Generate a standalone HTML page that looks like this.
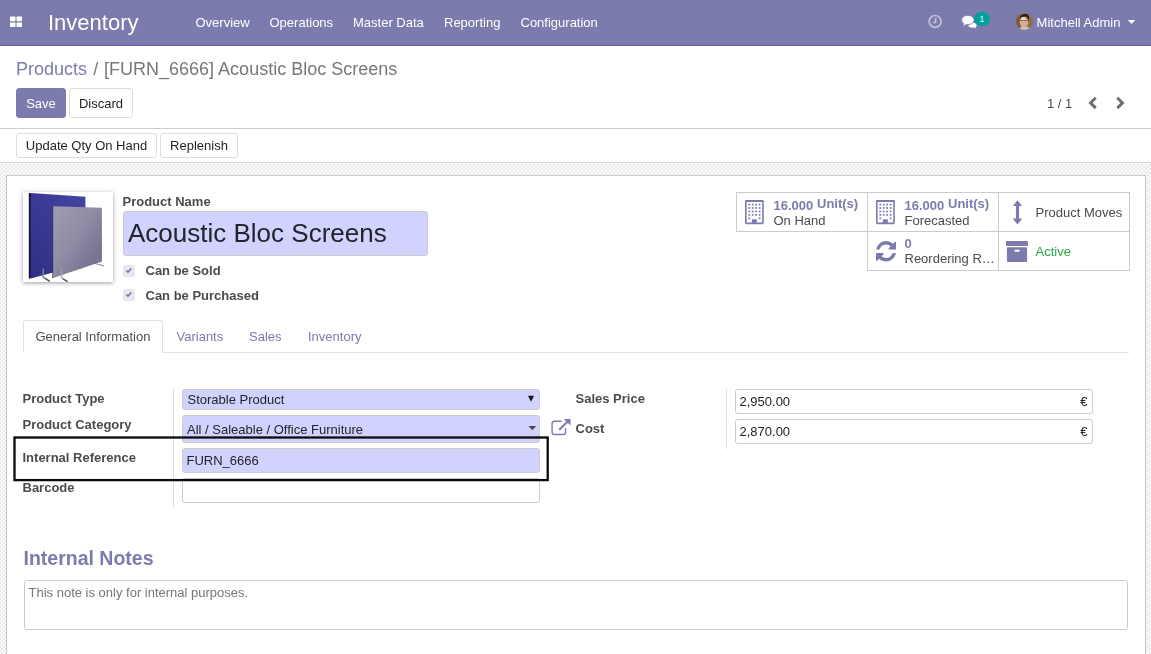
<!DOCTYPE html>
<html>
<head>
<meta charset="utf-8">
<title>Odoo</title>
<style>
*{box-sizing:border-box;margin:0;padding:0}
html,body{width:1151px;height:654px;overflow:hidden;background:#fff}
body{font-family:"Liberation Sans",sans-serif;font-size:13px;color:#4c4c4c;position:relative}
.abs{position:absolute;white-space:nowrap}
/* navbar */
#nav{position:absolute;left:0;top:0;width:1151px;height:46px;background:#7c7bad;border-bottom:1px solid #5f5e97;color:#fff}
#nav .mi{position:absolute;top:15px;font-size:13px;line-height:15px;color:#fff}
#brand{position:absolute;left:48px;top:10px;font-size:22px;line-height:26px;color:#fff}
/* control panel */
#cp{position:absolute;left:0;top:46px;width:1151px;height:83px;background:#fff;border-bottom:1px solid #ccc}
#bc{position:absolute;left:16px;top:58px;font-size:18px;line-height:22px;color:#777}
#bc a{color:#7c7bad;text-decoration:none}
.btn{position:absolute;font-size:13px;line-height:15px;border-radius:3px;text-align:center;white-space:nowrap}
.btn-p{background:#7c7bad;border:1px solid #7c7bad;color:#fff}
.btn-s{background:#fff;border:1px solid #dcdcdc;color:#212529}
/* status row */
#sb{position:absolute;left:0;top:129px;width:1151px;height:34px;background:#fff;border-bottom:1px solid #ced4da}
/* sheet bg */
#bg{position:absolute;left:0;top:164px;width:1151px;height:490px;
 background:conic-gradient(#eaeaea 25%,#fbfbfb 0 50%,#eaeaea 0 75%,#fbfbfb 0) -1px 0/4px 4px}
#sheet{position:absolute;left:6px;top:175px;width:1140px;height:500px;background:#fff;border:1px solid #c9c9d6}
.lbl{position:absolute;font-weight:bold;font-size:13px;line-height:15px;color:#4c4c4c;white-space:nowrap}
.inp{position:absolute;border:1px solid #ccc;border-radius:3px;background:#fff;font-size:13px;line-height:15px;color:#212529;white-space:nowrap;overflow:hidden}
.req{background:#d2d2ff}
.vline{position:absolute;width:1px;background:#ddd}

.cb{width:11.700px;height:11.500px;border-radius:2.500px;background:#e6e8f0}
.sbx{position:absolute;width:132px;height:40px;border:1px solid #ccc;background:#fff}
.sv{font-weight:bold;color:#7c7bad;font-size:13px;line-height:15px}
.st{color:#4c4c4c;font-size:13px;line-height:15px}
.tab{top:329px;font-size:13px;line-height:15px;color:#7c7bad}
</style>
</head>
<body>
<div id="root" style="position:absolute;left:0;top:0;width:1151px;height:654px;overflow:hidden;will-change:transform">
<div id="nav">
  <svg class="abs" style="left:10px;top:16px" width="12" height="12" viewBox="0 0 12 12"><rect x="0" y=".5" width="5.5" height="4.8" rx=".7" fill="#fff"/><rect x="6.5" y=".5" width="5.5" height="4.8" rx=".7" fill="#fff"/><rect x="0" y="6.4" width="5.5" height="4.6" rx=".7" fill="#fff"/><rect x="6.5" y="6.4" width="5.5" height="4.6" rx=".7" fill="#fff"/></svg>
  <div id="brand">Inventory</div>
  <div class="mi" style="left:195.5px">Overview</div>
  <div class="mi" style="left:269.500px">Operations</div>
  <div class="mi" style="left:353px">Master Data</div>
  <div class="mi" style="left:444px">Reporting</div>
  <div class="mi" style="left:520.500px">Configuration</div>
  <div class="mi" style="left:1036.600px">Mitchell Admin</div>
  <svg class="abs" style="left:927px;top:13px" width="17" height="17" viewBox="0 0 17 17"><circle cx="8.1" cy="8.4" r="5.900" fill="none" stroke="#c3c2dc" stroke-width="1.700"/><path d="M8.700 5v4.500H6" fill="none" stroke="#c3c2dc" stroke-width="1.400"/></svg>
  <svg class="abs" style="left:961px;top:15px" width="17" height="14" viewBox="0 0 17 14"><path d="M11.500 7.600c2.300 0 4.200 1.100 4.200 2.600 0 .8-.5 1.500-1.300 2 .2.500.6.900 1 1.200-1 0-2-.3-2.700-.8-.4.1-.8.100-1.200.100-2.300 0-4.200-1.100-4.200-2.500z" fill="#fff"/><path d="M6.800.400c3.400 0 6.200 2 6.200 4.600s-2.800 4.600-6.200 4.600c-.6 0-1.100-.05-1.600-.15-.9.800-2.100 1.300-3.400 1.300.5-.5.900-1.300 1.100-2.100C1.500 7.700.600 6.400.600 5 .600 2.400 3.400.400 6.800.400z" fill="#fff" stroke="#7c7bad" stroke-width=".7"/></svg>
  <div class="abs" style="left:973.800px;top:11.700px;width:16.400px;height:14.500px;border-radius:7.250px;background:#00a09d"></div>
  <div class="abs" style="left:973.800px;top:13.700px;width:16.400px;text-align:center;font-size:9px;line-height:11px;color:#e8fbfa">1</div>
  <svg class="abs" style="left:1016px;top:13px" width="17" height="17" viewBox="0 0 17 17"><defs><clipPath id="av"><circle cx="8.5" cy="8.500" r="8.400"/></clipPath></defs><g clip-path="url(#av)"><rect width="17" height="17" fill="#8f7040"/><rect x="0" y="0" width="4" height="17" fill="#7a5a38"/><ellipse cx="8.6" cy="17" rx="6" ry="3.500" fill="#c9c4c2"/><ellipse cx="8" cy="9.200" rx="4.200" ry="5.300" fill="#d9aa98"/><ellipse cx="7.300" cy="6" rx="2.500" ry="2" fill="#ecd2c8"/><path d="M3.500 5.500C4 1.500 8 .3 11 1.300 13.500 2.200 13.300 6 12.600 8.500 12.300 6 11.500 4.300 10 3.600 8 3.200 5.500 3.600 3.500 5.500z" fill="#2b1d1a"/><path d="M4.200 7.500h7.800" stroke="#5a4038" stroke-width=".7" opacity=".85"/></g></svg>
  <svg class="abs" style="left:1127px;top:19px" width="9" height="6" viewBox="0 0 9 6"><path d="M.8 1h7.400L4.500 4.900z" fill="#fff"/></svg>
</div>
<div id="cp"></div>
<div id="bc"><a>Products</a><span style="padding:0 5.75px 0 6.25px">/</span>[FURN_6666] Acoustic Bloc Screens</div>
<div class="btn btn-p" style="left:16px;top:88px;width:50px;height:30px;padding-top:7px">Save</div>
<div class="btn btn-s" style="left:69px;top:88px;width:64px;height:30px;padding-top:7px">Discard</div>
<div class="abs" style="left:1047px;top:96px;font-size:13px;line-height:15px;color:#4c4c4c">1 / 1</div>
<svg class="abs" style="left:1087px;top:95px" width="12" height="16" viewBox="0 0 12 16"><path d="M8.700 2.700L3.500 7.900l5.200 5.200" fill="none" stroke="#6b6e74" stroke-width="2.900" stroke-linejoin="miter"/></svg>
<svg class="abs" style="left:1114px;top:95px" width="12" height="16" viewBox="0 0 12 16"><path d="M3.300 2.700l5.200 5.200-5.200 5.200" fill="none" stroke="#6b6e74" stroke-width="2.900" stroke-linejoin="miter"/></svg>
<div id="sb"></div>
<div class="btn btn-s" style="left:16px;top:133px;width:141px;height:25px;padding-top:4px">Update Qty On Hand</div>
<div class="btn btn-s" style="left:160px;top:133px;width:78px;height:25px;padding-top:4px">Replenish</div>
<div id="bg"></div>
<div id="sheet"></div>

<!-- product image -->
<div class="abs" style="left:23px;top:192px;width:90px;height:90px;background:#fff;box-shadow:0 1px 4px rgba(0,0,0,.4)">
<svg width="90" height="90" viewBox="0 0 90 90">
  <defs>
    <linearGradient id="g1" x1="1" y1="0" x2="0" y2="1"><stop offset="0" stop-color="#4545a3"/><stop offset=".5" stop-color="#3a3a94"/><stop offset="1" stop-color="#2f2f84"/></linearGradient>
    <linearGradient id="g2" x1="0" y1="0" x2="1" y2="1"><stop offset="0" stop-color="#9f9cb4"/><stop offset=".45" stop-color="#8f8ca6"/><stop offset=".8" stop-color="#76738f"/><stop offset="1" stop-color="#6b6886"/></linearGradient>
  </defs>
  <path d="M20.200 76v9.200l6.500 4" stroke="#8d8d99" stroke-width="1.300" fill="none"/>
  <path d="M59 73v4" stroke="#9a9aa6" stroke-width="1" fill="none"/>
  <polygon points="5.800,1 8,1.200 8,86 5.800,86.800" fill="#14143a"/>
  <polygon points="7.600,1.100 62.400,4.800 62.400,72 7.600,86.600" fill="url(#g1)"/>
  <path d="M20.200 76.500v8.700l6.500 4" stroke="#8d8d99" stroke-width="1.300" fill="none"/>
  <path d="M22 86.300l4.700 2.900" stroke="#55555f" stroke-width="1.300" fill="none"/>
  <path d="M70.500 71l10.500 3" stroke="#8d8d99" stroke-width="1.200" fill="none"/>
  <polygon points="29.300,14.200 30.600,14.300 30.600,85.800 29.300,86.200" fill="#3a3850"/>
  <polygon points="30.200,14.300 78.900,15.800 78.900,69.400 30.200,85.900" fill="url(#g2)"/>
  <path d="M38.500 77v9l6 3.600" stroke="#a3a3ae" stroke-width="1.300" fill="none"/>
  <path d="M40 86.900l4.500 2.700" stroke="#55555f" stroke-width="1.300" fill="none"/>
  <path d="M75 66.500v3" stroke="#9a98ae" stroke-width=".8" fill="none"/>
</svg>
</div>
<!-- title -->
<div class="lbl" style="left:122.500px;top:194px">Product Name</div>
<div class="inp req" style="left:123px;top:211px;width:305px;height:45px;font-size:26px;line-height:30px;padding:6px 4px;color:#212529">Acoustic Bloc Screens</div>
<div class="abs cb" style="left:123.300px;top:265.300px"><svg width="12" height="12" viewBox="0 0 12 12" style="position:absolute;left:0;top:0"><path d="M3.400 5.500l1.600 1.600 3.300-3.500" fill="none" stroke="#7472b0" stroke-width="1.500"/></svg></div>
<div class="lbl" style="left:145.500px;top:263px">Can be Sold</div>
<div class="abs cb" style="left:123.300px;top:289.300px"><svg width="12" height="12" viewBox="0 0 12 12" style="position:absolute;left:0;top:0"><path d="M3.400 5.500l1.600 1.600 3.300-3.500" fill="none" stroke="#7472b0" stroke-width="1.500"/></svg></div>
<div class="lbl" style="left:145.500px;top:288px">Can be Purchased</div>

<!-- stat buttons -->
<div id="stats">
  <div class="sbx" style="left:736px;top:192px"></div>
  <div class="sbx" style="left:867px;top:192px"></div>
  <div class="sbx" style="left:998px;top:192px"></div>
  <div class="sbx" style="left:867px;top:231px"></div>
  <div class="sbx" style="left:998px;top:231px"></div>
</div>
<div class="abs sv" style="left:773.500px;top:198px">16.000</div><div class="abs sv" style="left:817px;top:196px">Unit(s)</div>
<div class="abs st" style="left:773.500px;top:213px">On Hand</div>
<div class="abs sv" style="left:904.500px;top:198px">16.000</div><div class="abs sv" style="left:948px;top:196px">Unit(s)</div>
<div class="abs st" style="left:904.500px;top:213px">Forecasted</div>
<div class="abs st" style="left:1035.500px;top:205px">Product Moves</div>
<div class="abs sv" style="left:904.500px;top:236px">0</div>
<div class="abs st" style="left:904.500px;top:251px">Reordering R&#8230;</div>
<div class="abs st" style="left:1035.500px;top:244px;color:#28a745">Active</div>

<svg class="abs" style="left:745px;top:200px" width="19" height="25" viewBox="0 0 19 25" fill="#7c7bad"><rect x=".8" y=".9" width="17.200" height="22.500" rx=".6" fill="none" stroke="#7c7bad" stroke-width="1.600"/><rect x=".2" y=".2" width="18.400" height="1.800" rx=".6"/><rect x="3.40" y="3.75" width="1.8" height="1.7"/><rect x="6.80" y="3.75" width="1.8" height="1.7"/><rect x="10.20" y="3.75" width="1.8" height="1.7"/><rect x="13.70" y="3.75" width="1.8" height="1.7"/><rect x="3.40" y="7.15" width="1.8" height="1.7"/><rect x="6.80" y="7.15" width="1.8" height="1.7"/><rect x="10.20" y="7.15" width="1.8" height="1.7"/><rect x="13.70" y="7.15" width="1.8" height="1.7"/><rect x="3.40" y="10.65" width="1.8" height="1.7"/><rect x="6.80" y="10.65" width="1.8" height="1.7"/><rect x="10.20" y="10.65" width="1.8" height="1.7"/><rect x="13.70" y="10.65" width="1.8" height="1.7"/><rect x="3.40" y="14.05" width="1.8" height="1.7"/><rect x="6.80" y="14.05" width="1.8" height="1.7"/><rect x="10.20" y="14.05" width="1.8" height="1.7"/><rect x="13.70" y="14.05" width="1.8" height="1.7"/><rect x="3.40" y="17.45" width="1.8" height="1.7"/><rect x="13.70" y="17.45" width="1.8" height="1.7"/><rect x="6.900" y="19.300" width="4.900" height="4.400"/></svg>
<svg class="abs" style="left:876px;top:200px" width="19" height="25" viewBox="0 0 19 25" fill="#7c7bad"><rect x=".8" y=".9" width="17.200" height="22.500" rx=".6" fill="none" stroke="#7c7bad" stroke-width="1.600"/><rect x=".2" y=".2" width="18.400" height="1.800" rx=".6"/><rect x="3.40" y="3.75" width="1.8" height="1.7"/><rect x="6.80" y="3.75" width="1.8" height="1.7"/><rect x="10.20" y="3.75" width="1.8" height="1.7"/><rect x="13.70" y="3.75" width="1.8" height="1.7"/><rect x="3.40" y="7.15" width="1.8" height="1.7"/><rect x="6.80" y="7.15" width="1.8" height="1.7"/><rect x="10.20" y="7.15" width="1.8" height="1.7"/><rect x="13.70" y="7.15" width="1.8" height="1.7"/><rect x="3.40" y="10.65" width="1.8" height="1.7"/><rect x="6.80" y="10.65" width="1.8" height="1.7"/><rect x="10.20" y="10.65" width="1.8" height="1.7"/><rect x="13.70" y="10.65" width="1.8" height="1.7"/><rect x="3.40" y="14.05" width="1.8" height="1.7"/><rect x="6.80" y="14.05" width="1.8" height="1.7"/><rect x="10.20" y="14.05" width="1.8" height="1.7"/><rect x="13.70" y="14.05" width="1.8" height="1.7"/><rect x="3.40" y="17.45" width="1.8" height="1.7"/><rect x="13.70" y="17.45" width="1.8" height="1.7"/><rect x="6.900" y="19.300" width="4.900" height="4.400"/></svg>
<svg class="abs" style="left:875.800px;top:241px" width="20.200" height="20.500" viewBox="0 0 1536 1536" preserveAspectRatio="none"><path fill="#7c7bad" d="M1511 928q0 5-1 7-64 268-268 434.500T764 1536q-146 0-282.500-55T238 1324l-129 129q-19 19-45 19t-45-19-19-45V960q0-26 19-45t45-19h448q26 0 45 19t19 45-19 45l-137 137q71 66 161 102t187 36q134 0 250-65t186-179q11-17 53-117 8-23 30-23h192q13 0 22.500 9.500t9.500 22.500zm25-800v448q0 26-19 45t-45 19h-448q-26 0-45-19t-19-45 19-45l138-138Q969 256 768 256q-134 0-250 65T332 500q-11 17-53 117-8 23-30 23H50q-13 0-22.500-9.500T18 608v-7q65-268 270-434.500T768 0q146 0 284 55.500T1297 212l130-129q19-19 45-19t45 19 19 45z"/></svg>
<svg class="abs" style="left:1012.900px;top:200.200px" width="9" height="24.800" viewBox="0 0 9.600 24.600" preserveAspectRatio="none"><path fill="#7c7bad" d="M4.800.3L9.300 5.400a.4.400 0 0 1-.3.600H6.500v12.400H9a.4.400 0 0 1 .3.600L4.800 24.300.3 19a.4.400 0 0 1 .3-.6h2.500V6H.6a.4.400 0 0 1-.3-.6z"/></svg>
<svg class="abs" style="left:1006px;top:240.800px" width="22" height="21" viewBox="0 0 22 21"><rect x="0" y="0" width="22" height="5" rx=".7" fill="#7c7bad"/><rect x=".9" y="6.200" width="20.200" height="14.700" rx=".8" fill="#7c7bad"/><rect x="8.400" y="8.800" width="5.400" height="2" rx="1" fill="#fff"/></svg>
<!-- tabs -->
<div class="abs" style="left:23px;top:352px;width:1106px;height:1px;background:#dee2e6"></div>
<div class="abs" style="left:23px;top:320px;width:140px;height:33px;border:1px solid #dee2e6;border-bottom:1px solid #fff;border-radius:3px 3px 0 0;background:#fff"></div>
<div class="abs tab" style="left:35.500px;color:#495057">General Information</div>
<div class="abs tab" style="left:176.500px">Variants</div>
<div class="abs tab" style="left:249px">Sales</div>
<div class="abs tab" style="left:308px">Inventory</div>

<!-- left group -->
<div class="vline" style="left:173px;top:389px;height:119px"></div>
<div class="lbl" style="left:22.500px;top:391px">Product Type</div>
<div class="lbl" style="left:22.500px;top:417px">Product Category</div>
<div class="lbl" style="left:22.500px;top:450px">Internal Reference</div>
<div class="lbl" style="left:22.500px;top:480px">Barcode</div>
<div class="inp req" style="left:182px;top:389px;width:358px;height:21px;padding:2px 4px 0 4.500px">Storable Product</div>
<svg class="abs" style="left:527px;top:395px" width="8" height="8" viewBox="0 0 8 8"><path d="M1 .7h6L4 6.800z" fill="#151515"/></svg>
<div class="inp req" style="left:182px;top:415px;width:358px;height:28px;padding:6px 4px 0 4px">All / Saleable / Office Furniture</div>
<svg class="abs" style="left:528px;top:425px" width="9" height="6" viewBox="0 0 9 6"><path d="M.4 1.100h7.800L4.300 5.200z" fill="#4a4a4a"/></svg>
<div class="inp req" style="left:182px;top:448px;width:358px;height:25px;padding:4px 4px 0 3.500px">FURN_6666</div>
<div class="inp" style="left:182px;top:478px;width:358px;height:25px"></div>
<!-- external link icon -->
<svg class="abs" style="left:551px;top:418px" width="21" height="18" viewBox="0 0 21 18"><path d="M10.700 3.250H3.400a2.300 2.300 0 0 0-2.300 2.300v8.700a2.300 2.300 0 0 0 2.300 2.300h8.800a2.300 2.300 0 0 0 2.300-2.300V10.200" fill="none" stroke="#7c7bad" stroke-width="1.400"/><path d="M12.800.9h6.700v6.700z" fill="#7c7bad"/><path d="M8.200 11.800L17 3.200" stroke="#7c7bad" stroke-width="2.100" fill="none"/></svg>

<!-- right group -->
<div class="vline" style="left:726px;top:389px;height:60px"></div>
<div class="lbl" style="left:575.500px;top:391px">Sales Price</div>
<div class="lbl" style="left:575.500px;top:421px">Cost</div>
<div class="inp" style="left:735px;top:389px;width:358px;height:25px;padding:4px 4px 0 3.500px">2,950.00</div>
<div class="abs" style="left:1080.300px;top:394px;color:#212529">&#8364;</div>
<div class="inp" style="left:735px;top:419px;width:358px;height:25px;padding:4px 4px 0 3.500px">2,870.00</div>
<div class="abs" style="left:1080.300px;top:424px;color:#212529">&#8364;</div>

<!-- highlight -->
<svg class="abs" style="left:10px;top:430px" width="545" height="56" viewBox="0 0 545 56"><rect x="4.500" y="7.500" width="533.200" height="42.600" fill="none" stroke="#0a0a0a" stroke-width="2.300"/></svg>

<!-- notes -->
<div class="abs" style="left:23.500px;top:546px;font-size:19.500px;line-height:24px;font-weight:bold;color:#7c7bad">Internal Notes</div>
<div class="inp" style="left:24px;top:580px;width:1104px;height:50px;padding:4px 4px 0 3.500px;color:#777">This note is only for internal purposes.</div>

</div>
</body>
</html>
